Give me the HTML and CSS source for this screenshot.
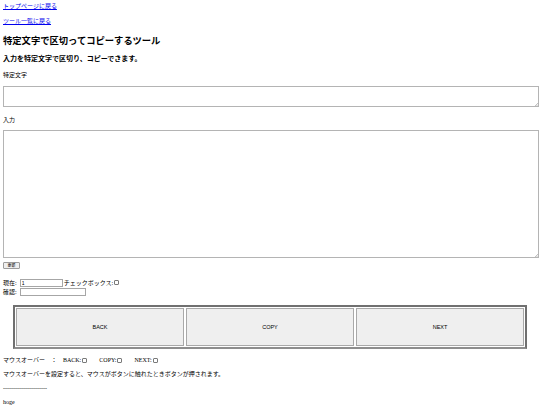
FILE: index.html
```html
<!DOCTYPE html>
<html lang="ja">
<head>
<meta charset="utf-8">
<title>特定文字で区切ってコピーするツール</title>
<link rel="stylesheet" href="styles.css">
</head>
<body>
<p class="nav nav-first"><a href="#">トップページに戻る</a></p>
<p class="nav"><a href="#">ツール一覧に戻る</a></p>
<h2 class="title">特定文字で区切ってコピーするツール</h2>
<h3 class="lead">入力を特定文字で区切り、コピーできます。</h3>
<p class="label label-sep">特定文字</p>
<div class="area-wrap area-wrap-sep">
  <textarea class="area area-small"></textarea>
  <svg class="grip" viewBox="0 0 4 4"><path d="M1 4 L4 1 M2.5 4 L4 2.5" stroke="#9a9a9a" stroke-width="0.6"/></svg>
</div>
<p class="label label-input">入力</p>
<div class="area-wrap area-wrap-input">
  <textarea class="area area-large"></textarea>
  <svg class="grip" viewBox="0 0 4 4"><path d="M1 4 L4 1 M2.5 4 L4 2.5" stroke="#9a9a9a" stroke-width="0.6"/></svg>
</div>
<button class="btn-update" type="button">更新</button>
<div class="status">
  <div class="row"><span class="row-label">現在:</span><input class="field field-short" type="text" value="1"><span class="row-label row-label-check">チェックボックス:</span><input class="check" type="checkbox"></div>
  <div class="row"><span class="row-label">確認:</span><input class="field field-long" type="text"></div>
</div>
<div class="pad">
  <button class="pad-btn" type="button">BACK</button>
  <button class="pad-btn" type="button">COPY</button>
  <button class="pad-btn" type="button">NEXT</button>
</div>
<p class="mouse">マウスオーバー　：　<span class="opt opt-first">BACK:<input class="check" type="checkbox"></span><span class="opt">COPY:<input class="check" type="checkbox"></span><span class="opt">NEXT:<input class="check" type="checkbox"></span></p>
<p class="line">マウスオーバーを設定すると、マウスがボタンに触れたときボタンが押されます。</p>
<p class="line rule">----------------------</p>
<p class="line">hoge</p>
</body>
</html>
```

FILE: styles.css
```css
html {
  background: #ffffff;
}

body {
  margin: 0;
  padding: 2px 3px 0;
  font-family: "Liberation Serif", "Noto Sans CJK JP", serif;
  font-size: 6px;
  line-height: 8px;
  color: #000000;
}

p {
  margin: 0;
}

a {
  color: #0000ee;
  text-decoration: underline;
}

.nav {
  margin-top: 7px;
}

.nav-first {
  margin-top: 0;
}

.title {
  margin: 9px 0 0;
  font-family: "Noto Sans CJK JP", sans-serif;
  font-size: 9.3px;
  line-height: 12px;
  font-weight: bold;
}

.lead {
  margin: 7px 0 0;
  font-family: "Noto Sans CJK JP", sans-serif;
  font-size: 7px;
  line-height: 10px;
  font-weight: bold;
}

.label-sep {
  margin-top: 8px;
}

.label-input {
  margin-top: 9px;
}

.area-wrap {
  position: relative;
  width: 536px;
}

.area-wrap-sep {
  margin-top: 7px;
}

.area-wrap-input {
  margin-top: 6px;
}

.area {
  display: block;
  box-sizing: border-box;
  width: 100%;
  margin: 0;
  padding: 1px;
  border: 1px solid #b4b4b4;
  background: #ffffff;
  resize: none;
  font: inherit;
}

.area-small {
  height: 21px;
}

.area-large {
  height: 128px;
}

.grip {
  position: absolute;
  right: 1px;
  bottom: 1px;
  width: 4px;
  height: 4px;
}

.btn-update {
  display: block;
  box-sizing: border-box;
  width: 17px;
  height: 7px;
  margin: 4px 0 0;
  padding: 0;
  border: 1px solid #9c9c9c;
  border-radius: 1px;
  background: #efefef;
  font-family: "Noto Sans CJK JP", sans-serif;
  font-size: 4px;
  line-height: 5px;
  color: #000000;
}

.status {
  margin-top: 9px;
}

.row {
  display: flex;
  align-items: center;
  height: 9px;
}

.row-label {
  margin-right: 3px;
}

.row-label-check {
  margin-left: 1px;
  margin-right: 0;
}

.field {
  box-sizing: border-box;
  height: 8px;
  margin: 0;
  padding: 0 1px;
  border: 1px solid #a6a6a6;
  background: #ffffff;
  font-family: "Liberation Sans", Arial, sans-serif;
  font-size: 5px;
  line-height: 6px;
  color: #000000;
}

.field-short {
  width: 43px;
}

.field-long {
  width: 66px;
}

.check {
  appearance: none;
  -webkit-appearance: none;
  box-sizing: border-box;
  width: 5px;
  height: 5px;
  margin: 0 0 0 1px;
  padding: 0;
  border: 1px solid #7a7a7a;
  border-radius: 1px;
  background: #ffffff;
  vertical-align: -0.5px;
}

.pad {
  display: flex;
  gap: 2px;
  height: 44px;
  box-sizing: border-box;
  margin: 9px 10px 0;
  padding: 1px;
  border: 2px solid #707070;
  border-bottom-color: #8e8e8e;
  background: #ffffff;
}

.pad-btn {
  flex: 1;
  margin: 0;
  padding: 0;
  border: 1px solid #a9a9a9;
  background: #efefef;
  font-family: "Liberation Sans", Arial, sans-serif;
  font-size: 5.5px;
  color: #000000;
}

.mouse {
  margin-top: 7px;
}

.opt {
  display: inline;
}

.opt + .opt {
  margin-left: 12px;
}

.line {
  margin-top: 6px;
}

.rule {
  color: #000000;
}
```
